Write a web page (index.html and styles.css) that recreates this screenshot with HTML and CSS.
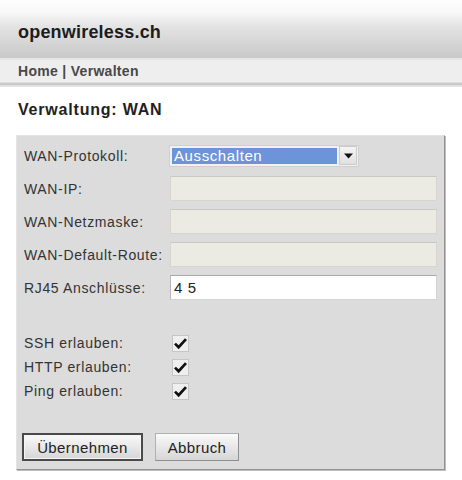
FILE: index.html
```html
<!DOCTYPE html>
<html lang="de">
<head>
<meta charset="utf-8">
<title>openwireless.ch – Verwaltung: WAN</title>
<link rel="stylesheet" href="styles.css">
</head>
<body>
<header class="top">
  <div class="brand">openwireless.ch</div>
</header>
<nav class="crumbs">Home | Verwalten</nav>
<h1 class="page-title">Verwaltung: WAN</h1>
<div class="panel">
  <div class="fields">
    <div class="row">
      <span class="label">WAN-Protokoll:</span>
      <div class="select">
        <span class="select-value">Ausschalten</span>
        <span class="select-btn">
          <svg width="9" height="6" viewBox="0 0 9 6"><path d="M0 0.5 H9 L4.5 5.5 Z" fill="#111"/></svg>
        </span>
      </div>
    </div>
    <div class="row">
      <span class="label">WAN-IP:</span>
      <span class="input disabled"></span>
    </div>
    <div class="row">
      <span class="label">WAN-Netzmaske:</span>
      <span class="input disabled"></span>
    </div>
    <div class="row">
      <span class="label">WAN-Default-Route:</span>
      <span class="input disabled"></span>
    </div>
    <div class="row">
      <span class="label">RJ45 Anschlüsse:</span>
      <span class="input">4 5</span>
    </div>
  </div>
  <div class="checks">
    <div class="check-row">
      <span class="label">SSH erlauben:</span>
      <svg class="cb" width="17" height="17" viewBox="0 0 17 17"><rect x="0.5" y="0.5" width="16" height="16" fill="#efefef" stroke="#c6c6c6"/><path d="M3 8.6 L6.6 12.2 L14 4.2" fill="none" stroke="#111" stroke-width="2.7"/></svg>
    </div>
    <div class="check-row">
      <span class="label">HTTP erlauben:</span>
      <svg class="cb" width="17" height="17" viewBox="0 0 17 17"><rect x="0.5" y="0.5" width="16" height="16" fill="#efefef" stroke="#c6c6c6"/><path d="M3 8.6 L6.6 12.2 L14 4.2" fill="none" stroke="#111" stroke-width="2.7"/></svg>
    </div>
    <div class="check-row">
      <span class="label">Ping erlauben:</span>
      <svg class="cb" width="17" height="17" viewBox="0 0 17 17"><rect x="0.5" y="0.5" width="16" height="16" fill="#efefef" stroke="#c6c6c6"/><path d="M3 8.6 L6.6 12.2 L14 4.2" fill="none" stroke="#111" stroke-width="2.7"/></svg>
    </div>
  </div>
  <div class="buttons">
    <span class="btn btn-default">Übernehmen</span>
    <span class="btn btn-cancel">Abbruch</span>
  </div>
</div>
</body>
</html>
```
FILE: styles.css
```css
* { box-sizing: border-box; }
html, body { margin: 0; padding: 0; background: #fff; }
body {
  width: 462px;
  height: 480px;
  overflow: hidden;
  font-family: "Liberation Sans", Arial, sans-serif;
  color: #333;
}
.top {
  height: 60px;
  padding: 6px 0 0 18px;
  display: flex;
  align-items: center;
  background: linear-gradient(to bottom, #fefefe 0%, #f7f7f7 22%, #e4e4e4 45%, #d2d2d2 80%, #c9c9c9 100%);
  border-bottom: 2px solid #e6e6e6;
}
.brand {
  font-size: 18px;
  font-weight: bold;
  color: #1c1c1c;
  letter-spacing: 0.2px;
}
.crumbs {
  height: 22px;
  padding: 1px 0 0 18px;
  line-height: 21px;
  font-size: 14px;
  font-weight: bold;
  color: #484848;
  letter-spacing: 0.3px;
  background: #eeeeee;
  box-shadow: 0 1px 0 #dedede, 0 3px 0 #c9c9c9, 0 5px 0 #e2e2e2;
}
.page-title {
  margin: 18px 0 15px 18px;
  font-size: 16px;
  line-height: 20px;
  font-weight: bold;
  color: #222;
  letter-spacing: 0.8px;
}
.panel {
  margin-left: 16px;
  width: 429px;
  height: 335px;
  padding: 3px 6px 0 5px;
  background: #dcdcdc;
  border: 1px solid #e4e4e4;
  border-right-color: #939393;
  border-bottom-color: #939393;
  box-shadow: 1px 1px 0 #bdbdbd;
}
.label {
  width: 148px;
  flex: none;
  padding-left: 2px;
  font-size: 14px;
  letter-spacing: 0.65px;
  color: #333;
  white-space: nowrap;
}
.row {
  height: 33px;
  display: flex;
  align-items: center;
}
.input {
  width: 267px;
  height: 25px;
  padding: 0 0 0 3px;
  font-size: 15px;
  line-height: 24px;
  color: #222;
  letter-spacing: 0.6px;
  background: #fff;
  border: 1px solid #d4d4d4;
  border-top-color: #a8a8a8;
  border-left-color: #b8b8b8;
}
.input.disabled {
  background: #ebebe3;
  border: 1px solid #d6d6ce;
  border-top-color: #c9c9c2;
}
.select {
  width: 190px;
  height: 22px;
  margin-left: -1px;
  display: flex;
  align-items: center;
  gap: 2px;
  padding: 0 1px 0 2px;
  background: #f1f1f1;
  border: 1px solid #cfcfcf;
}
.select-value {
  width: 167px;
  height: 16px;
  line-height: 16px;
  padding-left: 2px;
  font-size: 15px;
  letter-spacing: 0.6px;
  color: #fff;
  background: #6d93d8;
}
.select-btn {
  width: 18px;
  height: 19px;
  display: flex;
  align-items: center;
  justify-content: center;
  background: linear-gradient(#f4f4f4, #e0e0e0);
  border: 1px solid #cbcbcb;
}
.checks {
  margin-top: 27px;
}
.check-row {
  height: 24px;
  display: flex;
  align-items: center;
}
.cb {
  margin-left: 2px;
}
.buttons {
  margin-top: 30px;
  display: flex;
  gap: 12px;
}
.btn {
  height: 28px;
  display: flex;
  align-items: center;
  justify-content: center;
  font-size: 15px;
  letter-spacing: 0.4px;
  color: #222;
  background: linear-gradient(#fafafa, #e4e4e4 60%, #d6d6d6);
}
.btn-default {
  width: 121px;
  border: 2px solid #4a4a4a;
  box-shadow: inset 0 0 0 1px #f4f4f4;
}
.btn-cancel {
  width: 84px;
  border: 1px solid #b0b0b0;
  border-right-color: #8f8f8f;
  border-bottom-color: #8f8f8f;
}
```
